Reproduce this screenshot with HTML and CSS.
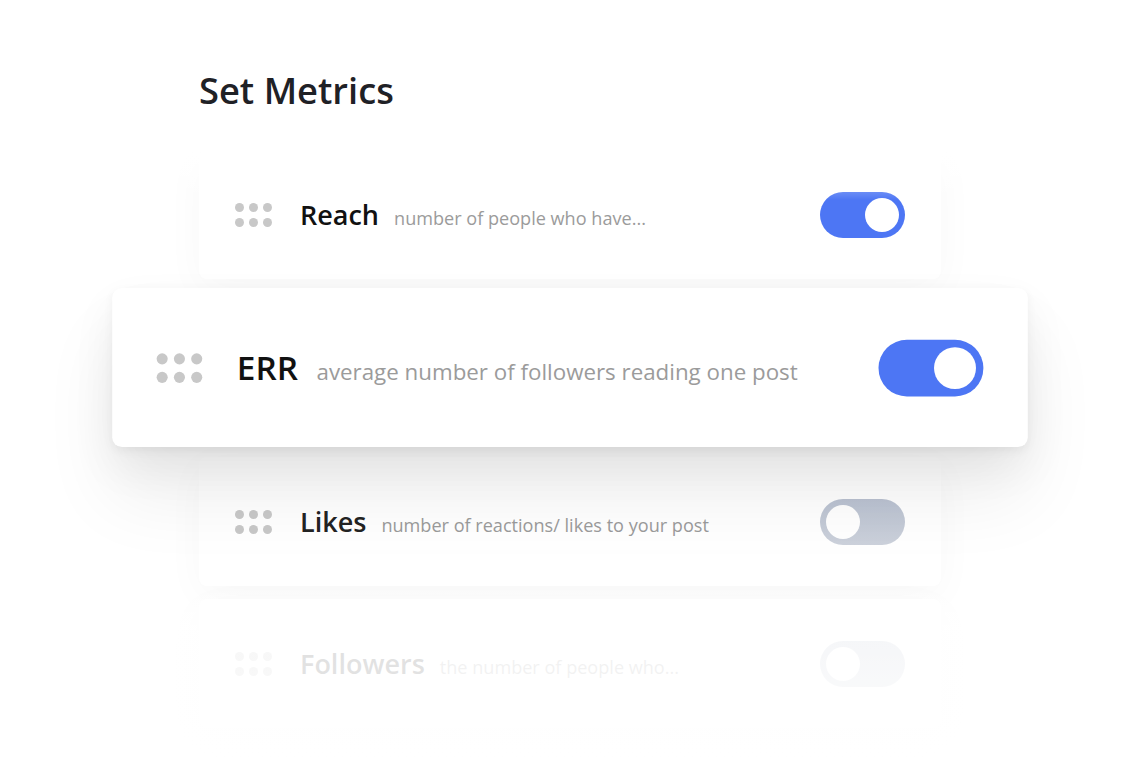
FILE: index.html
```html
<!DOCTYPE html>
<html lang="en">
<head>
<meta charset="utf-8">
<title>Set Metrics</title>
<link rel="stylesheet" href="styles.css">
</head>
<body>
<main class="page">
  <h1 class="page-title">Set Metrics</h1>
  <ul class="metrics">
    <li class="metric">
      <span class="grip"><i></i><i></i><i></i><i></i><i></i><i></i></span>
      <div class="metric-text">
        <span class="metric-name">Reach</span>
        <span class="metric-desc">number of people who have...</span>
      </div>
      <span class="toggle is-on"><span class="knob"></span></span>
    </li>
    <li class="metric metric--active">
      <span class="grip"><i></i><i></i><i></i><i></i><i></i><i></i></span>
      <div class="metric-text">
        <span class="metric-name">ERR</span>
        <span class="metric-desc">average number of followers reading one post</span>
      </div>
      <span class="toggle is-on"><span class="knob"></span></span>
    </li>
    <li class="metric">
      <span class="grip"><i></i><i></i><i></i><i></i><i></i><i></i></span>
      <div class="metric-text">
        <span class="metric-name metric-name--soft">Likes</span>
        <span class="metric-desc">number of reactions/ likes to your post</span>
      </div>
      <span class="toggle"><span class="knob"></span></span>
    </li>
    <li class="metric">
      <span class="grip"><i></i><i></i><i></i><i></i><i></i><i></i></span>
      <div class="metric-text">
        <span class="metric-name metric-name--soft">Followers</span>
        <span class="metric-desc">the number of people who...</span>
      </div>
      <span class="toggle"><span class="knob"></span></span>
    </li>
  </ul>
</main>
</body>
</html>
```

FILE: styles.css
```css
* {
  box-sizing: border-box;
}

html,
body {
  margin: 0;
  background: #ffffff;
}

body {
  width: 1140px;
  height: 760px;
  overflow: hidden;
  font-family: "Open Sans", "Noto Sans", sans-serif;
}

.page {
  padding: 66px 0 0 199px;
}

.page-title {
  margin: 0;
  font-size: 36.3px;
  line-height: 48px;
  font-weight: 600;
  color: #1f2126;
}

/* list of metric rows */
.metrics {
  position: relative;
  list-style: none;
  margin: 36px 0 0;
  padding: 0;
  width: 742px;
}

/* soft fade over the first row's top edge */
.metrics::before {
  content: "";
  position: absolute;
  left: -60px;
  right: -100px;
  top: -30px;
  height: 80px;
  background: linear-gradient(to bottom, #ffffff 40%, rgba(255, 255, 255, 0));
  z-index: 2;
  pointer-events: none;
}

/* fade that washes out the last row */
.metrics::after {
  content: "";
  position: absolute;
  left: -200px;
  right: -200px;
  top: 436px;
  height: 200px;
  background: linear-gradient(to bottom,
      rgba(255, 255, 255, 0) 0,
      rgba(255, 255, 255, 0.86) 45px,
      rgba(255, 255, 255, 0.88) 120px,
      #ffffff 180px);
  z-index: 2;
  pointer-events: none;
}

.metric {
  display: flex;
  align-items: center;
  height: 129px;
  padding: 0 36px;
  background: #ffffff;
  border-radius: 8px;
  box-shadow: 0 10px 40px rgba(0, 0, 0, 0.03);
  margin-bottom: 13px;
}

.metric--active {
  position: relative;
  z-index: 1;
  margin: 24px 0 25px;
  transform: scale(1.234);
  box-shadow: 0 3px 8px rgba(0, 0, 0, 0.05), 0 16px 36px rgba(0, 0, 0, 0.06), 0 40px 60px rgba(0, 0, 0, 0.07);
}

/* six-dot drag handle */
.grip {
  display: grid;
  grid-template-columns: repeat(3, 9px);
  grid-auto-rows: 9px;
  column-gap: 5px;
  row-gap: 6px;
  flex: none;
}

.grip i {
  display: block;
  width: 9px;
  height: 9px;
  border-radius: 50%;
  background: #c8c8c8;
}

.metric-text {
  display: flex;
  align-items: baseline;
  margin-left: 28px;
  white-space: nowrap;
}

.metric-name {
  font-size: 27px;
  font-weight: 600;
  color: #111111;
}

.metric-name--soft {
  color: #232323;
}

.metric-desc {
  margin-left: 15px;
  font-size: 18.1px;
  color: #9b9b9b;
}

/* switch */
.toggle {
  margin-left: auto;
  flex: none;
  display: flex;
  align-items: center;
  width: 85px;
  height: 46px;
  padding: 0 6px;
  border-radius: 23px;
  background: linear-gradient(to bottom, #bac2d1, #ccd1db);
}

.toggle .knob {
  width: 34px;
  height: 34px;
  border-radius: 50%;
  background: #ffffff;
}

.toggle.is-on {
  justify-content: flex-end;
  background: #4d76f4;
}
```
